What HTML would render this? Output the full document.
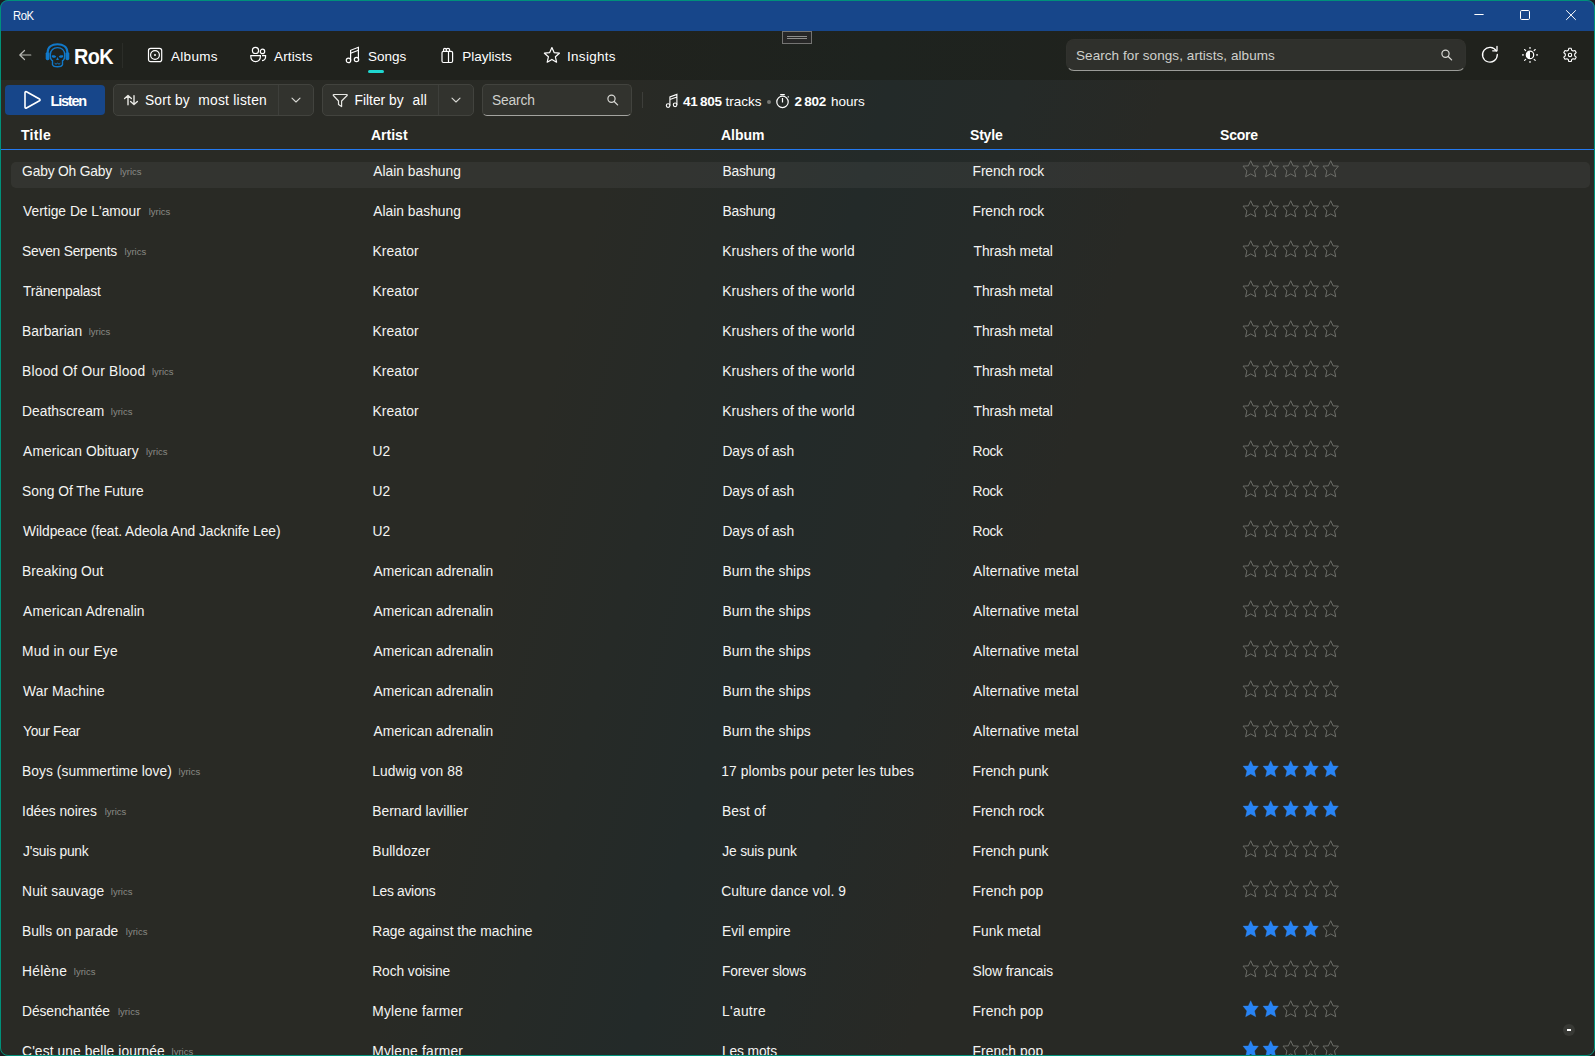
<!DOCTYPE html>
<html>
<head>
<meta charset="utf-8">
<style>
html,body{margin:0;padding:0;}
body{width:1595px;height:1056px;overflow:hidden;background:#1c1d20;font-family:"Liberation Sans",sans-serif;color:#fff;position:relative;}
#win{position:absolute;left:0;top:0;width:1595px;height:1056px;border-radius:8px;overflow:hidden;background:#282925;}
#bord{position:absolute;left:0;top:0;width:1595px;height:1056px;box-sizing:border-box;border:1px solid #00917a;border-radius:8px;}
#titlebar{position:absolute;left:0;top:0;width:1595px;height:31px;background:#17468a;}
#titlebar .t{position:absolute;left:13px;top:9px;font-size:12.5px;line-height:15px;letter-spacing:-0.5px;transform:scaleX(0.9);transform-origin:0 0;color:#fff;}
#nav{position:absolute;left:0;top:31px;width:1595px;height:49px;background:linear-gradient(90deg,#20221d 0%,#20221d 38%,#1e231f 55%,#20221d 75%,#20221d 100%);}
#content{position:absolute;left:0;top:80px;width:1595px;height:976px;background:linear-gradient(105deg,#292a25 0%,#292a25 34%,#262a27 41%,#232a29 48%,#252a28 55%,#282925 63%,#282925 100%);}
.abs{position:absolute;}
.navtxt{position:absolute;top:48px;font-size:13.5px;line-height:18px;color:#fff;}
.btn{position:absolute;top:84px;height:32px;border-radius:4px;box-sizing:border-box;}
.hdr{position:absolute;top:126px;font-size:14px;font-weight:bold;line-height:18px;color:#fff;}
.row{position:absolute;left:0;width:1595px;height:40px;}
.c{position:absolute;top:0;line-height:40px;font-size:13.8px;color:#f4f4f2;white-space:nowrap;}
.c1{left:23px;}
.c2{left:373px;}
.c3{left:723px;}
.c4{left:973px;}
.ly{position:absolute;top:0px;line-height:40px;font-size:9.5px;color:#8a8b86;white-space:nowrap;}
.sc{position:absolute;left:1240px;top:8px;}
.stars{display:block;}
</style>
</head>
<body>
<div id="win">
  <div id="titlebar">
    <div class="t">RoK</div>
    <!-- window controls -->
    <svg class="abs" style="left:1472px;top:8px" width="110" height="14" viewBox="0 0 110 14">
      <line x1="2.4" y1="6.5" x2="11.6" y2="6.5" stroke="#fff" stroke-width="1"/>
      <rect x="48.5" y="2.5" width="9" height="9" rx="1.2" fill="none" stroke="#fff" stroke-width="1"/>
      <path d="M94.2 2.3 L103.8 11.9 M103.8 2.3 L94.2 11.9" stroke="#fff" stroke-width="1"/>
    </svg>
  </div>
  <div id="nav">
    <!-- drag handle -->
    <div class="abs" style="left:782px;top:0px;width:30px;height:13px;box-sizing:border-box;border:1px solid #747472;background:#272727;"></div>
    <div class="abs" style="left:787px;top:5px;width:20px;height:1px;background:#8e8e8c;"></div>
    <div class="abs" style="left:787px;top:7px;width:20px;height:1px;background:#8e8e8c;"></div>
  </div>
  <div id="content"></div>

  <!-- back arrow -->
  <svg class="abs" style="left:14px;top:42px" width="24" height="24" viewBox="0 0 24 24">
    <path d="M10.5 8.5 L5.8 13 L10.5 17.5 M6 13 L16.8 13" fill="none" stroke="#b8b9b4" stroke-width="1.2" stroke-linecap="round" stroke-linejoin="round"/>
  </svg>
  <!-- logo -->
  <svg class="abs" style="left:40px;top:40px" width="35" height="30" viewBox="0 0 35 30">
    <g fill="none" stroke="#1178c8">
      <path d="M7.6 12.5 C7.6 6.8 11.8 4.3 17.5 4.3 C23.2 4.3 27.4 6.8 27.4 12.5" stroke-width="2.1"/>
      <path d="M11.6 20.1 C10.4 19 10.3 17.2 10.3 14.9 C10.3 10.2 13.5 7.6 17.5 7.6 C21.5 7.6 24.7 10.2 24.7 14.9 C24.7 17.2 24.6 19 23.4 20.1 L22.5 20.7 L22.5 24.7 C21.9 26.1 19.9 26.8 17.5 26.8 C15.1 26.8 13.1 26.1 12.5 24.7 L12.5 20.7 Z" stroke-width="1.4"/>
      <path d="M14.6 23.2 L16 24.2 L17.5 23.2 L19 24.2 L20.4 23.2" stroke-width="1"/>
    </g>
    <g fill="#1178c8">
      <rect x="5.7" y="11.9" width="3.8" height="8.3" rx="1.7"/>
      <rect x="25.5" y="11.9" width="3.8" height="8.3" rx="1.7"/>
      <path d="M11.8 15.6 C12.8 14.8 15.2 15.1 16.2 16.4 C15.8 17.8 13.8 18.2 12.6 17.6 C11.8 17.2 11.6 16.2 11.8 15.6 Z"/>
      <path d="M23.2 15.6 C22.2 14.8 19.8 15.1 18.8 16.4 C19.2 17.8 21.2 18.2 22.4 17.6 C23.2 17.2 23.4 16.2 23.2 15.6 Z"/>
      <path d="M17.5 17 L16.1 20.1 L18.9 20.1 Z"/>
    </g>
  </svg>
  <div class="abs" style="left:73.5px;top:45px;font-size:22px;font-weight:bold;line-height:24px;letter-spacing:-0.6px;transform:scaleX(0.9);transform-origin:0 0;">RoK</div>
  <div class="abs" style="left:122px;top:43px;width:1px;height:25px;background:#2b2d28;"></div>

  <!-- nav tabs -->
  <svg class="abs" style="left:140px;top:42px" width="30" height="24" viewBox="0 0 30 24">
    <rect x="8.5" y="6.4" width="13.2" height="13.2" rx="2.2" fill="none" stroke="#fff" stroke-width="1.2"/>
    <circle cx="15" cy="13" r="4.4" fill="none" stroke="#fff" stroke-width="1.2"/>
    <circle cx="15" cy="13" r="1" fill="#fff"/>
  </svg>
  <div class="navtxt" style="left:171px;letter-spacing:0.3px">Albums</div>
  <svg class="abs" style="left:244px;top:42px" width="30" height="24" viewBox="0 0 30 24">
    <g fill="none" stroke="#fff" stroke-width="1.2">
      <circle cx="11.5" cy="8.4" r="3.1"/>
      <circle cx="18.5" cy="9.4" r="2.2"/>
      <path d="M6.8 13.6 L16.4 13.6 C16.6 17.5 14.5 19.6 11.6 19.6 C8.7 19.6 6.6 17.5 6.8 13.6 Z"/>
      <path d="M18 13.6 L21.6 13.6 C21.8 16.6 20.3 18.5 18 18.7"/>
    </g>
  </svg>
  <div class="navtxt" style="left:274px;letter-spacing:0.15px">Artists</div>
  <svg class="abs" style="left:338px;top:42px" width="30" height="24" viewBox="0 0 30 24">
    <g fill="none" stroke="#fff" stroke-width="1.2">
      <circle cx="10.5" cy="18.4" r="2.2"/>
      <circle cx="18.5" cy="17.5" r="2.2"/>
      <path d="M12.6 18.4 L12.6 8.3 L20.4 5.3 L20.4 17.5"/>
      <path d="M12.6 11.2 L20.4 8.3"/>
    </g>
  </svg>
  <div class="navtxt" style="left:368px">Songs</div>
  <div class="abs" style="left:368px;top:70px;width:16px;height:3px;border-radius:2px;background:#1fd6cf;"></div>
  <svg class="abs" style="left:432px;top:42px" width="30" height="24" viewBox="0 0 30 24">
    <g fill="none" stroke="#fff" stroke-width="1.2">
      <rect x="10" y="9.3" width="10.6" height="11.2" rx="1.5"/>
      <path d="M16.5 9.3 L16.5 20.5"/>
      <path d="M11.5 9.3 L11.5 7.8 C11.5 5.8 14.3 5.8 14.3 7.8 L14.3 9.3 M14.3 7.8 C14.3 5.8 17.6 5.8 17.6 7.8 L17.6 9.3"/>
    </g>
  </svg>
  <div class="navtxt" style="left:462.3px">Playlists</div>
  <svg class="abs" style="left:538px;top:42px" width="30" height="24" viewBox="0 0 30 24">
    <path d="M13.9 5.6 L16.1 10.6 L21.4 11.2 L17.4 14.8 L18.6 20.2 L13.9 17.4 L9.2 20.2 L10.4 14.8 L6.4 11.2 L11.7 10.6 Z" fill="none" stroke="#fff" stroke-width="1.2" stroke-linejoin="round"/>
  </svg>
  <div class="navtxt" style="left:567px;letter-spacing:0.3px">Insights</div>

  <!-- top search -->
  <div class="abs" style="left:1066px;top:39px;width:400px;height:32px;box-sizing:border-box;border-radius:8px;background:#2f302c;border:1px solid #31322e;border-bottom:1px solid #9b9c98;"></div>
  <div class="abs" style="left:1076px;top:47px;font-size:13.5px;line-height:18px;color:#cfd0cc;letter-spacing:0.07px;">Search for songs, artists, albums</div>
  <svg class="abs" style="left:1438px;top:46px" width="18" height="18" viewBox="0 0 18 18">
    <circle cx="7.5" cy="7.8" r="3.6" fill="none" stroke="#d8d8d4" stroke-width="1.2"/>
    <path d="M10.2 10.5 L13.6 13.9" stroke="#d8d8d4" stroke-width="1.3" stroke-linecap="round"/>
  </svg>
  <!-- refresh -->
  <svg class="abs" style="left:1478px;top:43px" width="24" height="24" viewBox="0 0 24 24">
    <path d="M18.3 8 A7.4 7.4 0 1 0 19.3 11.4" fill="none" stroke="#fff" stroke-width="1.3" stroke-linecap="round"/>
    <path d="M19 3.3 L19 7.8 L14.7 7.8" fill="none" stroke="#fff" stroke-width="1.3" stroke-linecap="round" stroke-linejoin="round"/>
  </svg>
  <!-- theme -->
  <svg class="abs" style="left:1518px;top:43px" width="24" height="24" viewBox="0 0 24 24">
    <circle cx="12" cy="11.9" r="3.7" fill="none" stroke="#fff" stroke-width="1.2"/>
    <path d="M12 8.2 A3.7 3.7 0 0 0 12 15.6 Z" fill="#fff"/>
    <g fill="#fff">
      <rect x="11.25" y="4.2" width="1.5" height="1.5"/><rect x="11.25" y="18.2" width="1.5" height="1.5"/>
      <rect x="4.2" y="11.15" width="1.5" height="1.5"/><rect x="18.3" y="11.15" width="1.5" height="1.5"/>
    </g>
    <g stroke="#fff" stroke-width="1.1" stroke-linecap="round">
      <path d="M6.6 6.5 L7.7 7.6 M17.2 6.5 L16.1 7.6 M6.6 17.4 L7.7 16.3 M17.2 17.4 L16.1 16.3"/>
    </g>
  </svg>
  <!-- settings -->
  <svg class="abs" style="left:1558px;top:43px" width="24" height="24" viewBox="0 0 24 24">
    <path d="M10.8 5.3 L13.2 5.3 L13.7 7.3 L15.1 8.1 L17 7.5 L18.2 9.6 L16.7 11 L16.7 12.8 L18.2 14.2 L17 16.3 L15.1 15.7 L13.7 16.5 L13.2 18.5 L10.8 18.5 L10.3 16.5 L8.9 15.7 L7 16.3 L5.8 14.2 L7.3 12.8 L7.3 11 L5.8 9.6 L7 7.5 L8.9 8.1 L10.3 7.3 Z" fill="none" stroke="#fff" stroke-width="1.1" stroke-linejoin="round"/>
    <circle cx="12" cy="11.9" r="1.7" fill="none" stroke="#fff" stroke-width="1.1"/>
  </svg>

  <!-- toolbar -->
  <div class="btn" style="left:5px;top:85px;height:30px;width:100px;background:#17468a;"></div>
  <svg class="abs" style="left:18px;top:86px" width="30" height="28" viewBox="0 0 30 28">
    <path d="M7 6.6 C7 5.8 7.8 5.4 8.5 5.8 L21.5 13 C22.2 13.4 22.2 14.4 21.5 14.8 L8.5 22 C7.8 22.4 7 22 7 21.2 Z" fill="none" stroke="#fff" stroke-width="1.6" stroke-linejoin="round"/>
  </svg>
  <div class="abs" style="left:50.5px;top:92px;font-size:14.5px;font-weight:bold;line-height:18px;letter-spacing:-1.2px;">Listen</div>

  <div class="btn" style="left:113px;width:201px;background:#32332e;border:1px solid #42433e;border-radius:5px;"></div>
  <div class="abs" style="left:278px;top:85px;width:1px;height:30px;background:#3e3f3b;"></div>
  <svg class="abs" style="left:118px;top:86px" width="30" height="28" viewBox="0 0 30 28">
    <g fill="none" stroke="#e8e8e4" stroke-width="1.4" stroke-linecap="round" stroke-linejoin="round">
      <path d="M6.6 12.6 L10 9.6 L13.4 12.6 M10 9.8 L10 18.8"/>
      <path d="M12.6 15.5 L16 18.5 L19.4 15.5 M16 9.6 L16 18.3"/>
    </g>
  </svg>
  <div class="abs" style="left:145px;top:92px;font-size:13.8px;line-height:18px;color:#fff;letter-spacing:0.15px;">Sort by</div>
  <div class="abs" style="left:198.3px;top:92px;font-size:13.8px;line-height:18px;color:#fff;letter-spacing:0.25px;">most listen</div>
  <svg class="abs" style="left:289px;top:95px" width="14" height="10" viewBox="0 0 14 10">
    <path d="M3 3.2 L7 7 L11 3.2" fill="none" stroke="#d8d8d4" stroke-width="1.1" stroke-linecap="round" stroke-linejoin="round"/>
  </svg>

  <div class="btn" style="left:322px;width:152px;background:#32332e;border:1px solid #42433e;border-radius:5px;"></div>
  <div class="abs" style="left:438px;top:85px;width:1px;height:30px;background:#3e3f3b;"></div>
  <svg class="abs" style="left:326px;top:86px" width="30" height="28" viewBox="0 0 30 28">
    <path d="M7.8 8.5 L20.7 8.5 C21.2 8.5 21.5 9.1 21.1 9.5 L15.6 15 L15.6 20.6 L12.5 18.6 L12.5 15 L7.4 9.5 C7 9.1 7.3 8.5 7.8 8.5 Z" fill="none" stroke="#e8e8e4" stroke-width="1.2" stroke-linejoin="round"/>
  </svg>
  <div class="abs" style="left:354.5px;top:92px;font-size:13.8px;line-height:18px;color:#fff;">Filter by</div>
  <div class="abs" style="left:412.5px;top:92px;font-size:13.8px;line-height:18px;color:#fff;letter-spacing:0.3px;">all</div>
  <svg class="abs" style="left:449px;top:95px" width="14" height="10" viewBox="0 0 14 10">
    <path d="M3 3.2 L7 7 L11 3.2" fill="none" stroke="#d8d8d4" stroke-width="1.1" stroke-linecap="round" stroke-linejoin="round"/>
  </svg>

  <div class="btn" style="left:482px;width:150px;height:32px;background:#32332e;border:1px solid #42433e;border-bottom:1px solid #a3a39f;border-radius:5px;"></div>
  <div class="abs" style="left:492px;top:92px;font-size:13.8px;line-height:18px;color:#cfd0cc;letter-spacing:-0.15px;">Search</div>
  <svg class="abs" style="left:604px;top:91px" width="18" height="18" viewBox="0 0 18 18">
    <circle cx="7.5" cy="7.8" r="3.6" fill="none" stroke="#d8d8d4" stroke-width="1.2"/>
    <path d="M10.2 10.5 L13.6 13.9" stroke="#d8d8d4" stroke-width="1.3" stroke-linecap="round"/>
  </svg>
  <div class="abs" style="left:642px;top:92px;width:1px;height:16px;background:#3d3e3a;"></div>

  <!-- stats -->
  <svg class="abs" style="left:662px;top:90px" width="20" height="20" viewBox="0 0 20 20">
    <g fill="none" stroke="#fff" stroke-width="1.1">
      <circle cx="6.1" cy="15.6" r="1.8"/>
      <circle cx="13.1" cy="14.8" r="1.8"/>
      <path d="M7.9 15.6 L7.9 6.9 L14.9 4.4 L14.9 14.8 M7.9 9.5 L14.9 7.1"/>
    </g>
  </svg>
  <div class="abs" style="left:683px;top:93px;font-size:13.5px;line-height:18px;white-space:nowrap;font-weight:bold;letter-spacing:-0.25px;">41&thinsp;805</div>
  <div class="abs" style="left:725.5px;top:93px;font-size:13.5px;line-height:18px;white-space:nowrap;">tracks</div>
  <div class="abs" style="left:767px;top:100px;width:3.5px;height:3.5px;border-radius:2px;background:#777873;"></div>
  <svg class="abs" style="left:773px;top:90px" width="20" height="20" viewBox="0 0 20 20">
    <g fill="none" stroke="#fff" stroke-width="1.2">
      <circle cx="9.5" cy="11.9" r="5.7"/>
      <path d="M7.2 4.6 L11.8 4.6 M9.5 8 L9.5 12.6 M14.8 6.5 L15.6 7.3"/>
    </g>
  </svg>
  <div class="abs" style="left:794.5px;top:93px;font-size:13.5px;line-height:18px;white-space:nowrap;font-weight:bold;letter-spacing:-0.25px;">2&thinsp;802</div>
  <div class="abs" style="left:831px;top:93px;font-size:13.5px;line-height:18px;white-space:nowrap;">hours</div>

  <!-- header -->
  <div class="hdr" style="left:21px;letter-spacing:0.3px">Title</div>
  <div class="hdr" style="left:371px">Artist</div>
  <div class="hdr" style="left:721px">Album</div>
  <div class="hdr" style="left:970px;letter-spacing:-0.2px">Style</div>
  <div class="hdr" style="left:1220px;letter-spacing:-0.2px">Score</div>
  <div class="abs" style="left:0;top:149px;width:1595px;height:1px;background:#2479f0;"></div>

  <!-- hover highlight -->
  <div class="abs" style="left:11px;top:162px;width:1579px;height:26px;border-radius:5px;background:rgba(255,255,255,0.052);"></div>

<div class="row" style="top:152px"><div class="c" style="left:22.1px;letter-spacing:-0.182px">Gaby Oh Gaby</div><span class="ly" style="left:119.9px">lyrics</span><div class="c" style="left:373.2px;letter-spacing:0.025px">Alain bashung</div><div class="c" style="left:722.5px;letter-spacing:-0.25px">Bashung</div><div class="c" style="left:972.6px;letter-spacing:-0.13px">French rock</div><div class="sc"><svg class="stars" width="100" height="18" viewBox="0 0 100 18"><path transform="translate(0,0)" d="M10.7 0.7 L13.1 5.9 L18.4 6.1 L14.5 10.9 L15.8 16.8 L10.7 13.9 L5.6 16.8 L6.9 10.9 L3.0 6.1 L8.3 5.9 Z" fill="none" stroke="#6b6c67" stroke-width="1" stroke-linejoin="round"/><path transform="translate(20,0)" d="M10.7 0.7 L13.1 5.9 L18.4 6.1 L14.5 10.9 L15.8 16.8 L10.7 13.9 L5.6 16.8 L6.9 10.9 L3.0 6.1 L8.3 5.9 Z" fill="none" stroke="#6b6c67" stroke-width="1" stroke-linejoin="round"/><path transform="translate(40,0)" d="M10.7 0.7 L13.1 5.9 L18.4 6.1 L14.5 10.9 L15.8 16.8 L10.7 13.9 L5.6 16.8 L6.9 10.9 L3.0 6.1 L8.3 5.9 Z" fill="none" stroke="#6b6c67" stroke-width="1" stroke-linejoin="round"/><path transform="translate(60,0)" d="M10.7 0.7 L13.1 5.9 L18.4 6.1 L14.5 10.9 L15.8 16.8 L10.7 13.9 L5.6 16.8 L6.9 10.9 L3.0 6.1 L8.3 5.9 Z" fill="none" stroke="#6b6c67" stroke-width="1" stroke-linejoin="round"/><path transform="translate(80,0)" d="M10.7 0.7 L13.1 5.9 L18.4 6.1 L14.5 10.9 L15.8 16.8 L10.7 13.9 L5.6 16.8 L6.9 10.9 L3.0 6.1 L8.3 5.9 Z" fill="none" stroke="#6b6c67" stroke-width="1" stroke-linejoin="round"/></svg></div></div>
<div class="row" style="top:192px"><div class="c" style="left:23.1px">Vertige De L&#x27;amour</div><span class="ly" style="left:148.7px">lyrics</span><div class="c" style="left:373.2px;letter-spacing:0.025px">Alain bashung</div><div class="c" style="left:722.5px;letter-spacing:-0.25px">Bashung</div><div class="c" style="left:972.6px;letter-spacing:-0.13px">French rock</div><div class="sc"><svg class="stars" width="100" height="18" viewBox="0 0 100 18"><path transform="translate(0,0)" d="M10.7 0.7 L13.1 5.9 L18.4 6.1 L14.5 10.9 L15.8 16.8 L10.7 13.9 L5.6 16.8 L6.9 10.9 L3.0 6.1 L8.3 5.9 Z" fill="none" stroke="#6b6c67" stroke-width="1" stroke-linejoin="round"/><path transform="translate(20,0)" d="M10.7 0.7 L13.1 5.9 L18.4 6.1 L14.5 10.9 L15.8 16.8 L10.7 13.9 L5.6 16.8 L6.9 10.9 L3.0 6.1 L8.3 5.9 Z" fill="none" stroke="#6b6c67" stroke-width="1" stroke-linejoin="round"/><path transform="translate(40,0)" d="M10.7 0.7 L13.1 5.9 L18.4 6.1 L14.5 10.9 L15.8 16.8 L10.7 13.9 L5.6 16.8 L6.9 10.9 L3.0 6.1 L8.3 5.9 Z" fill="none" stroke="#6b6c67" stroke-width="1" stroke-linejoin="round"/><path transform="translate(60,0)" d="M10.7 0.7 L13.1 5.9 L18.4 6.1 L14.5 10.9 L15.8 16.8 L10.7 13.9 L5.6 16.8 L6.9 10.9 L3.0 6.1 L8.3 5.9 Z" fill="none" stroke="#6b6c67" stroke-width="1" stroke-linejoin="round"/><path transform="translate(80,0)" d="M10.7 0.7 L13.1 5.9 L18.4 6.1 L14.5 10.9 L15.8 16.8 L10.7 13.9 L5.6 16.8 L6.9 10.9 L3.0 6.1 L8.3 5.9 Z" fill="none" stroke="#6b6c67" stroke-width="1" stroke-linejoin="round"/></svg></div></div>
<div class="row" style="top:232px"><div class="c" style="left:22.1px;letter-spacing:-0.231px">Seven Serpents</div><span class="ly" style="left:124.6px">lyrics</span><div class="c" style="left:372.5px;letter-spacing:0.133px">Kreator</div><div class="c" style="left:722.2px;letter-spacing:0.1px">Krushers of the world</div><div class="c" style="left:973.6px;letter-spacing:-0.109px">Thrash metal</div><div class="sc"><svg class="stars" width="100" height="18" viewBox="0 0 100 18"><path transform="translate(0,0)" d="M10.7 0.7 L13.1 5.9 L18.4 6.1 L14.5 10.9 L15.8 16.8 L10.7 13.9 L5.6 16.8 L6.9 10.9 L3.0 6.1 L8.3 5.9 Z" fill="none" stroke="#6b6c67" stroke-width="1" stroke-linejoin="round"/><path transform="translate(20,0)" d="M10.7 0.7 L13.1 5.9 L18.4 6.1 L14.5 10.9 L15.8 16.8 L10.7 13.9 L5.6 16.8 L6.9 10.9 L3.0 6.1 L8.3 5.9 Z" fill="none" stroke="#6b6c67" stroke-width="1" stroke-linejoin="round"/><path transform="translate(40,0)" d="M10.7 0.7 L13.1 5.9 L18.4 6.1 L14.5 10.9 L15.8 16.8 L10.7 13.9 L5.6 16.8 L6.9 10.9 L3.0 6.1 L8.3 5.9 Z" fill="none" stroke="#6b6c67" stroke-width="1" stroke-linejoin="round"/><path transform="translate(60,0)" d="M10.7 0.7 L13.1 5.9 L18.4 6.1 L14.5 10.9 L15.8 16.8 L10.7 13.9 L5.6 16.8 L6.9 10.9 L3.0 6.1 L8.3 5.9 Z" fill="none" stroke="#6b6c67" stroke-width="1" stroke-linejoin="round"/><path transform="translate(80,0)" d="M10.7 0.7 L13.1 5.9 L18.4 6.1 L14.5 10.9 L15.8 16.8 L10.7 13.9 L5.6 16.8 L6.9 10.9 L3.0 6.1 L8.3 5.9 Z" fill="none" stroke="#6b6c67" stroke-width="1" stroke-linejoin="round"/></svg></div></div>
<div class="row" style="top:272px"><div class="c" style="left:23.1px;letter-spacing:-0.209px">Tränenpalast</div><div class="c" style="left:372.5px;letter-spacing:0.133px">Kreator</div><div class="c" style="left:722.2px;letter-spacing:0.1px">Krushers of the world</div><div class="c" style="left:973.6px;letter-spacing:-0.109px">Thrash metal</div><div class="sc"><svg class="stars" width="100" height="18" viewBox="0 0 100 18"><path transform="translate(0,0)" d="M10.7 0.7 L13.1 5.9 L18.4 6.1 L14.5 10.9 L15.8 16.8 L10.7 13.9 L5.6 16.8 L6.9 10.9 L3.0 6.1 L8.3 5.9 Z" fill="none" stroke="#6b6c67" stroke-width="1" stroke-linejoin="round"/><path transform="translate(20,0)" d="M10.7 0.7 L13.1 5.9 L18.4 6.1 L14.5 10.9 L15.8 16.8 L10.7 13.9 L5.6 16.8 L6.9 10.9 L3.0 6.1 L8.3 5.9 Z" fill="none" stroke="#6b6c67" stroke-width="1" stroke-linejoin="round"/><path transform="translate(40,0)" d="M10.7 0.7 L13.1 5.9 L18.4 6.1 L14.5 10.9 L15.8 16.8 L10.7 13.9 L5.6 16.8 L6.9 10.9 L3.0 6.1 L8.3 5.9 Z" fill="none" stroke="#6b6c67" stroke-width="1" stroke-linejoin="round"/><path transform="translate(60,0)" d="M10.7 0.7 L13.1 5.9 L18.4 6.1 L14.5 10.9 L15.8 16.8 L10.7 13.9 L5.6 16.8 L6.9 10.9 L3.0 6.1 L8.3 5.9 Z" fill="none" stroke="#6b6c67" stroke-width="1" stroke-linejoin="round"/><path transform="translate(80,0)" d="M10.7 0.7 L13.1 5.9 L18.4 6.1 L14.5 10.9 L15.8 16.8 L10.7 13.9 L5.6 16.8 L6.9 10.9 L3.0 6.1 L8.3 5.9 Z" fill="none" stroke="#6b6c67" stroke-width="1" stroke-linejoin="round"/></svg></div></div>
<div class="row" style="top:312px"><div class="c" style="left:22.1px;letter-spacing:0.025px">Barbarian</div><span class="ly" style="left:88.7px">lyrics</span><div class="c" style="left:372.5px;letter-spacing:0.133px">Kreator</div><div class="c" style="left:722.2px;letter-spacing:0.1px">Krushers of the world</div><div class="c" style="left:973.6px;letter-spacing:-0.109px">Thrash metal</div><div class="sc"><svg class="stars" width="100" height="18" viewBox="0 0 100 18"><path transform="translate(0,0)" d="M10.7 0.7 L13.1 5.9 L18.4 6.1 L14.5 10.9 L15.8 16.8 L10.7 13.9 L5.6 16.8 L6.9 10.9 L3.0 6.1 L8.3 5.9 Z" fill="none" stroke="#6b6c67" stroke-width="1" stroke-linejoin="round"/><path transform="translate(20,0)" d="M10.7 0.7 L13.1 5.9 L18.4 6.1 L14.5 10.9 L15.8 16.8 L10.7 13.9 L5.6 16.8 L6.9 10.9 L3.0 6.1 L8.3 5.9 Z" fill="none" stroke="#6b6c67" stroke-width="1" stroke-linejoin="round"/><path transform="translate(40,0)" d="M10.7 0.7 L13.1 5.9 L18.4 6.1 L14.5 10.9 L15.8 16.8 L10.7 13.9 L5.6 16.8 L6.9 10.9 L3.0 6.1 L8.3 5.9 Z" fill="none" stroke="#6b6c67" stroke-width="1" stroke-linejoin="round"/><path transform="translate(60,0)" d="M10.7 0.7 L13.1 5.9 L18.4 6.1 L14.5 10.9 L15.8 16.8 L10.7 13.9 L5.6 16.8 L6.9 10.9 L3.0 6.1 L8.3 5.9 Z" fill="none" stroke="#6b6c67" stroke-width="1" stroke-linejoin="round"/><path transform="translate(80,0)" d="M10.7 0.7 L13.1 5.9 L18.4 6.1 L14.5 10.9 L15.8 16.8 L10.7 13.9 L5.6 16.8 L6.9 10.9 L3.0 6.1 L8.3 5.9 Z" fill="none" stroke="#6b6c67" stroke-width="1" stroke-linejoin="round"/></svg></div></div>
<div class="row" style="top:352px"><div class="c" style="left:22.1px;letter-spacing:0.2px">Blood Of Our Blood</div><span class="ly" style="left:151.9px">lyrics</span><div class="c" style="left:372.5px;letter-spacing:0.133px">Kreator</div><div class="c" style="left:722.2px;letter-spacing:0.1px">Krushers of the world</div><div class="c" style="left:973.6px;letter-spacing:-0.109px">Thrash metal</div><div class="sc"><svg class="stars" width="100" height="18" viewBox="0 0 100 18"><path transform="translate(0,0)" d="M10.7 0.7 L13.1 5.9 L18.4 6.1 L14.5 10.9 L15.8 16.8 L10.7 13.9 L5.6 16.8 L6.9 10.9 L3.0 6.1 L8.3 5.9 Z" fill="none" stroke="#6b6c67" stroke-width="1" stroke-linejoin="round"/><path transform="translate(20,0)" d="M10.7 0.7 L13.1 5.9 L18.4 6.1 L14.5 10.9 L15.8 16.8 L10.7 13.9 L5.6 16.8 L6.9 10.9 L3.0 6.1 L8.3 5.9 Z" fill="none" stroke="#6b6c67" stroke-width="1" stroke-linejoin="round"/><path transform="translate(40,0)" d="M10.7 0.7 L13.1 5.9 L18.4 6.1 L14.5 10.9 L15.8 16.8 L10.7 13.9 L5.6 16.8 L6.9 10.9 L3.0 6.1 L8.3 5.9 Z" fill="none" stroke="#6b6c67" stroke-width="1" stroke-linejoin="round"/><path transform="translate(60,0)" d="M10.7 0.7 L13.1 5.9 L18.4 6.1 L14.5 10.9 L15.8 16.8 L10.7 13.9 L5.6 16.8 L6.9 10.9 L3.0 6.1 L8.3 5.9 Z" fill="none" stroke="#6b6c67" stroke-width="1" stroke-linejoin="round"/><path transform="translate(80,0)" d="M10.7 0.7 L13.1 5.9 L18.4 6.1 L14.5 10.9 L15.8 16.8 L10.7 13.9 L5.6 16.8 L6.9 10.9 L3.0 6.1 L8.3 5.9 Z" fill="none" stroke="#6b6c67" stroke-width="1" stroke-linejoin="round"/></svg></div></div>
<div class="row" style="top:392px"><div class="c" style="left:22.1px;letter-spacing:0.02px">Deathscream</div><span class="ly" style="left:110.8px">lyrics</span><div class="c" style="left:372.5px;letter-spacing:0.133px">Kreator</div><div class="c" style="left:722.2px;letter-spacing:0.1px">Krushers of the world</div><div class="c" style="left:973.6px;letter-spacing:-0.109px">Thrash metal</div><div class="sc"><svg class="stars" width="100" height="18" viewBox="0 0 100 18"><path transform="translate(0,0)" d="M10.7 0.7 L13.1 5.9 L18.4 6.1 L14.5 10.9 L15.8 16.8 L10.7 13.9 L5.6 16.8 L6.9 10.9 L3.0 6.1 L8.3 5.9 Z" fill="none" stroke="#6b6c67" stroke-width="1" stroke-linejoin="round"/><path transform="translate(20,0)" d="M10.7 0.7 L13.1 5.9 L18.4 6.1 L14.5 10.9 L15.8 16.8 L10.7 13.9 L5.6 16.8 L6.9 10.9 L3.0 6.1 L8.3 5.9 Z" fill="none" stroke="#6b6c67" stroke-width="1" stroke-linejoin="round"/><path transform="translate(40,0)" d="M10.7 0.7 L13.1 5.9 L18.4 6.1 L14.5 10.9 L15.8 16.8 L10.7 13.9 L5.6 16.8 L6.9 10.9 L3.0 6.1 L8.3 5.9 Z" fill="none" stroke="#6b6c67" stroke-width="1" stroke-linejoin="round"/><path transform="translate(60,0)" d="M10.7 0.7 L13.1 5.9 L18.4 6.1 L14.5 10.9 L15.8 16.8 L10.7 13.9 L5.6 16.8 L6.9 10.9 L3.0 6.1 L8.3 5.9 Z" fill="none" stroke="#6b6c67" stroke-width="1" stroke-linejoin="round"/><path transform="translate(80,0)" d="M10.7 0.7 L13.1 5.9 L18.4 6.1 L14.5 10.9 L15.8 16.8 L10.7 13.9 L5.6 16.8 L6.9 10.9 L3.0 6.1 L8.3 5.9 Z" fill="none" stroke="#6b6c67" stroke-width="1" stroke-linejoin="round"/></svg></div></div>
<div class="row" style="top:432px"><div class="c" style="left:23.1px;letter-spacing:0.081px">American Obituary</div><span class="ly" style="left:145.9px">lyrics</span><div class="c" style="left:372.5px;letter-spacing:0.1px">U2</div><div class="c" style="left:722.5px;letter-spacing:-0.13px">Days of ash</div><div class="c" style="left:972.6px;letter-spacing:-0.4px">Rock</div><div class="sc"><svg class="stars" width="100" height="18" viewBox="0 0 100 18"><path transform="translate(0,0)" d="M10.7 0.7 L13.1 5.9 L18.4 6.1 L14.5 10.9 L15.8 16.8 L10.7 13.9 L5.6 16.8 L6.9 10.9 L3.0 6.1 L8.3 5.9 Z" fill="none" stroke="#6b6c67" stroke-width="1" stroke-linejoin="round"/><path transform="translate(20,0)" d="M10.7 0.7 L13.1 5.9 L18.4 6.1 L14.5 10.9 L15.8 16.8 L10.7 13.9 L5.6 16.8 L6.9 10.9 L3.0 6.1 L8.3 5.9 Z" fill="none" stroke="#6b6c67" stroke-width="1" stroke-linejoin="round"/><path transform="translate(40,0)" d="M10.7 0.7 L13.1 5.9 L18.4 6.1 L14.5 10.9 L15.8 16.8 L10.7 13.9 L5.6 16.8 L6.9 10.9 L3.0 6.1 L8.3 5.9 Z" fill="none" stroke="#6b6c67" stroke-width="1" stroke-linejoin="round"/><path transform="translate(60,0)" d="M10.7 0.7 L13.1 5.9 L18.4 6.1 L14.5 10.9 L15.8 16.8 L10.7 13.9 L5.6 16.8 L6.9 10.9 L3.0 6.1 L8.3 5.9 Z" fill="none" stroke="#6b6c67" stroke-width="1" stroke-linejoin="round"/><path transform="translate(80,0)" d="M10.7 0.7 L13.1 5.9 L18.4 6.1 L14.5 10.9 L15.8 16.8 L10.7 13.9 L5.6 16.8 L6.9 10.9 L3.0 6.1 L8.3 5.9 Z" fill="none" stroke="#6b6c67" stroke-width="1" stroke-linejoin="round"/></svg></div></div>
<div class="row" style="top:472px"><div class="c" style="left:22.1px">Song Of The Future</div><div class="c" style="left:372.5px;letter-spacing:0.1px">U2</div><div class="c" style="left:722.5px;letter-spacing:-0.13px">Days of ash</div><div class="c" style="left:972.6px;letter-spacing:-0.4px">Rock</div><div class="sc"><svg class="stars" width="100" height="18" viewBox="0 0 100 18"><path transform="translate(0,0)" d="M10.7 0.7 L13.1 5.9 L18.4 6.1 L14.5 10.9 L15.8 16.8 L10.7 13.9 L5.6 16.8 L6.9 10.9 L3.0 6.1 L8.3 5.9 Z" fill="none" stroke="#6b6c67" stroke-width="1" stroke-linejoin="round"/><path transform="translate(20,0)" d="M10.7 0.7 L13.1 5.9 L18.4 6.1 L14.5 10.9 L15.8 16.8 L10.7 13.9 L5.6 16.8 L6.9 10.9 L3.0 6.1 L8.3 5.9 Z" fill="none" stroke="#6b6c67" stroke-width="1" stroke-linejoin="round"/><path transform="translate(40,0)" d="M10.7 0.7 L13.1 5.9 L18.4 6.1 L14.5 10.9 L15.8 16.8 L10.7 13.9 L5.6 16.8 L6.9 10.9 L3.0 6.1 L8.3 5.9 Z" fill="none" stroke="#6b6c67" stroke-width="1" stroke-linejoin="round"/><path transform="translate(60,0)" d="M10.7 0.7 L13.1 5.9 L18.4 6.1 L14.5 10.9 L15.8 16.8 L10.7 13.9 L5.6 16.8 L6.9 10.9 L3.0 6.1 L8.3 5.9 Z" fill="none" stroke="#6b6c67" stroke-width="1" stroke-linejoin="round"/><path transform="translate(80,0)" d="M10.7 0.7 L13.1 5.9 L18.4 6.1 L14.5 10.9 L15.8 16.8 L10.7 13.9 L5.6 16.8 L6.9 10.9 L3.0 6.1 L8.3 5.9 Z" fill="none" stroke="#6b6c67" stroke-width="1" stroke-linejoin="round"/></svg></div></div>
<div class="row" style="top:512px"><div class="c" style="left:23.1px;letter-spacing:-0.045px">Wildpeace (feat. Adeola And Jacknife Lee)</div><div class="c" style="left:372.5px;letter-spacing:0.1px">U2</div><div class="c" style="left:722.5px;letter-spacing:-0.13px">Days of ash</div><div class="c" style="left:972.6px;letter-spacing:-0.4px">Rock</div><div class="sc"><svg class="stars" width="100" height="18" viewBox="0 0 100 18"><path transform="translate(0,0)" d="M10.7 0.7 L13.1 5.9 L18.4 6.1 L14.5 10.9 L15.8 16.8 L10.7 13.9 L5.6 16.8 L6.9 10.9 L3.0 6.1 L8.3 5.9 Z" fill="none" stroke="#6b6c67" stroke-width="1" stroke-linejoin="round"/><path transform="translate(20,0)" d="M10.7 0.7 L13.1 5.9 L18.4 6.1 L14.5 10.9 L15.8 16.8 L10.7 13.9 L5.6 16.8 L6.9 10.9 L3.0 6.1 L8.3 5.9 Z" fill="none" stroke="#6b6c67" stroke-width="1" stroke-linejoin="round"/><path transform="translate(40,0)" d="M10.7 0.7 L13.1 5.9 L18.4 6.1 L14.5 10.9 L15.8 16.8 L10.7 13.9 L5.6 16.8 L6.9 10.9 L3.0 6.1 L8.3 5.9 Z" fill="none" stroke="#6b6c67" stroke-width="1" stroke-linejoin="round"/><path transform="translate(60,0)" d="M10.7 0.7 L13.1 5.9 L18.4 6.1 L14.5 10.9 L15.8 16.8 L10.7 13.9 L5.6 16.8 L6.9 10.9 L3.0 6.1 L8.3 5.9 Z" fill="none" stroke="#6b6c67" stroke-width="1" stroke-linejoin="round"/><path transform="translate(80,0)" d="M10.7 0.7 L13.1 5.9 L18.4 6.1 L14.5 10.9 L15.8 16.8 L10.7 13.9 L5.6 16.8 L6.9 10.9 L3.0 6.1 L8.3 5.9 Z" fill="none" stroke="#6b6c67" stroke-width="1" stroke-linejoin="round"/></svg></div></div>
<div class="row" style="top:552px"><div class="c" style="left:22.1px;letter-spacing:0.073px">Breaking Out</div><div class="c" style="left:373.5px;letter-spacing:0.047px">American adrenalin</div><div class="c" style="left:722.5px">Burn the ships</div><div class="c" style="left:973.1px;letter-spacing:0.169px">Alternative metal</div><div class="sc"><svg class="stars" width="100" height="18" viewBox="0 0 100 18"><path transform="translate(0,0)" d="M10.7 0.7 L13.1 5.9 L18.4 6.1 L14.5 10.9 L15.8 16.8 L10.7 13.9 L5.6 16.8 L6.9 10.9 L3.0 6.1 L8.3 5.9 Z" fill="none" stroke="#6b6c67" stroke-width="1" stroke-linejoin="round"/><path transform="translate(20,0)" d="M10.7 0.7 L13.1 5.9 L18.4 6.1 L14.5 10.9 L15.8 16.8 L10.7 13.9 L5.6 16.8 L6.9 10.9 L3.0 6.1 L8.3 5.9 Z" fill="none" stroke="#6b6c67" stroke-width="1" stroke-linejoin="round"/><path transform="translate(40,0)" d="M10.7 0.7 L13.1 5.9 L18.4 6.1 L14.5 10.9 L15.8 16.8 L10.7 13.9 L5.6 16.8 L6.9 10.9 L3.0 6.1 L8.3 5.9 Z" fill="none" stroke="#6b6c67" stroke-width="1" stroke-linejoin="round"/><path transform="translate(60,0)" d="M10.7 0.7 L13.1 5.9 L18.4 6.1 L14.5 10.9 L15.8 16.8 L10.7 13.9 L5.6 16.8 L6.9 10.9 L3.0 6.1 L8.3 5.9 Z" fill="none" stroke="#6b6c67" stroke-width="1" stroke-linejoin="round"/><path transform="translate(80,0)" d="M10.7 0.7 L13.1 5.9 L18.4 6.1 L14.5 10.9 L15.8 16.8 L10.7 13.9 L5.6 16.8 L6.9 10.9 L3.0 6.1 L8.3 5.9 Z" fill="none" stroke="#6b6c67" stroke-width="1" stroke-linejoin="round"/></svg></div></div>
<div class="row" style="top:592px"><div class="c" style="left:23.1px;letter-spacing:0.106px">American Adrenalin</div><div class="c" style="left:373.5px;letter-spacing:0.047px">American adrenalin</div><div class="c" style="left:722.5px">Burn the ships</div><div class="c" style="left:973.1px;letter-spacing:0.169px">Alternative metal</div><div class="sc"><svg class="stars" width="100" height="18" viewBox="0 0 100 18"><path transform="translate(0,0)" d="M10.7 0.7 L13.1 5.9 L18.4 6.1 L14.5 10.9 L15.8 16.8 L10.7 13.9 L5.6 16.8 L6.9 10.9 L3.0 6.1 L8.3 5.9 Z" fill="none" stroke="#6b6c67" stroke-width="1" stroke-linejoin="round"/><path transform="translate(20,0)" d="M10.7 0.7 L13.1 5.9 L18.4 6.1 L14.5 10.9 L15.8 16.8 L10.7 13.9 L5.6 16.8 L6.9 10.9 L3.0 6.1 L8.3 5.9 Z" fill="none" stroke="#6b6c67" stroke-width="1" stroke-linejoin="round"/><path transform="translate(40,0)" d="M10.7 0.7 L13.1 5.9 L18.4 6.1 L14.5 10.9 L15.8 16.8 L10.7 13.9 L5.6 16.8 L6.9 10.9 L3.0 6.1 L8.3 5.9 Z" fill="none" stroke="#6b6c67" stroke-width="1" stroke-linejoin="round"/><path transform="translate(60,0)" d="M10.7 0.7 L13.1 5.9 L18.4 6.1 L14.5 10.9 L15.8 16.8 L10.7 13.9 L5.6 16.8 L6.9 10.9 L3.0 6.1 L8.3 5.9 Z" fill="none" stroke="#6b6c67" stroke-width="1" stroke-linejoin="round"/><path transform="translate(80,0)" d="M10.7 0.7 L13.1 5.9 L18.4 6.1 L14.5 10.9 L15.8 16.8 L10.7 13.9 L5.6 16.8 L6.9 10.9 L3.0 6.1 L8.3 5.9 Z" fill="none" stroke="#6b6c67" stroke-width="1" stroke-linejoin="round"/></svg></div></div>
<div class="row" style="top:632px"><div class="c" style="left:22.1px;letter-spacing:0.208px">Mud in our Eye</div><div class="c" style="left:373.5px;letter-spacing:0.047px">American adrenalin</div><div class="c" style="left:722.5px">Burn the ships</div><div class="c" style="left:973.1px;letter-spacing:0.169px">Alternative metal</div><div class="sc"><svg class="stars" width="100" height="18" viewBox="0 0 100 18"><path transform="translate(0,0)" d="M10.7 0.7 L13.1 5.9 L18.4 6.1 L14.5 10.9 L15.8 16.8 L10.7 13.9 L5.6 16.8 L6.9 10.9 L3.0 6.1 L8.3 5.9 Z" fill="none" stroke="#6b6c67" stroke-width="1" stroke-linejoin="round"/><path transform="translate(20,0)" d="M10.7 0.7 L13.1 5.9 L18.4 6.1 L14.5 10.9 L15.8 16.8 L10.7 13.9 L5.6 16.8 L6.9 10.9 L3.0 6.1 L8.3 5.9 Z" fill="none" stroke="#6b6c67" stroke-width="1" stroke-linejoin="round"/><path transform="translate(40,0)" d="M10.7 0.7 L13.1 5.9 L18.4 6.1 L14.5 10.9 L15.8 16.8 L10.7 13.9 L5.6 16.8 L6.9 10.9 L3.0 6.1 L8.3 5.9 Z" fill="none" stroke="#6b6c67" stroke-width="1" stroke-linejoin="round"/><path transform="translate(60,0)" d="M10.7 0.7 L13.1 5.9 L18.4 6.1 L14.5 10.9 L15.8 16.8 L10.7 13.9 L5.6 16.8 L6.9 10.9 L3.0 6.1 L8.3 5.9 Z" fill="none" stroke="#6b6c67" stroke-width="1" stroke-linejoin="round"/><path transform="translate(80,0)" d="M10.7 0.7 L13.1 5.9 L18.4 6.1 L14.5 10.9 L15.8 16.8 L10.7 13.9 L5.6 16.8 L6.9 10.9 L3.0 6.1 L8.3 5.9 Z" fill="none" stroke="#6b6c67" stroke-width="1" stroke-linejoin="round"/></svg></div></div>
<div class="row" style="top:672px"><div class="c" style="left:23.1px;letter-spacing:0.08px">War Machine</div><div class="c" style="left:373.5px;letter-spacing:0.047px">American adrenalin</div><div class="c" style="left:722.5px">Burn the ships</div><div class="c" style="left:973.1px;letter-spacing:0.169px">Alternative metal</div><div class="sc"><svg class="stars" width="100" height="18" viewBox="0 0 100 18"><path transform="translate(0,0)" d="M10.7 0.7 L13.1 5.9 L18.4 6.1 L14.5 10.9 L15.8 16.8 L10.7 13.9 L5.6 16.8 L6.9 10.9 L3.0 6.1 L8.3 5.9 Z" fill="none" stroke="#6b6c67" stroke-width="1" stroke-linejoin="round"/><path transform="translate(20,0)" d="M10.7 0.7 L13.1 5.9 L18.4 6.1 L14.5 10.9 L15.8 16.8 L10.7 13.9 L5.6 16.8 L6.9 10.9 L3.0 6.1 L8.3 5.9 Z" fill="none" stroke="#6b6c67" stroke-width="1" stroke-linejoin="round"/><path transform="translate(40,0)" d="M10.7 0.7 L13.1 5.9 L18.4 6.1 L14.5 10.9 L15.8 16.8 L10.7 13.9 L5.6 16.8 L6.9 10.9 L3.0 6.1 L8.3 5.9 Z" fill="none" stroke="#6b6c67" stroke-width="1" stroke-linejoin="round"/><path transform="translate(60,0)" d="M10.7 0.7 L13.1 5.9 L18.4 6.1 L14.5 10.9 L15.8 16.8 L10.7 13.9 L5.6 16.8 L6.9 10.9 L3.0 6.1 L8.3 5.9 Z" fill="none" stroke="#6b6c67" stroke-width="1" stroke-linejoin="round"/><path transform="translate(80,0)" d="M10.7 0.7 L13.1 5.9 L18.4 6.1 L14.5 10.9 L15.8 16.8 L10.7 13.9 L5.6 16.8 L6.9 10.9 L3.0 6.1 L8.3 5.9 Z" fill="none" stroke="#6b6c67" stroke-width="1" stroke-linejoin="round"/></svg></div></div>
<div class="row" style="top:712px"><div class="c" style="left:23.1px;letter-spacing:-0.35px">Your Fear</div><div class="c" style="left:373.5px;letter-spacing:0.047px">American adrenalin</div><div class="c" style="left:722.5px">Burn the ships</div><div class="c" style="left:973.1px;letter-spacing:0.169px">Alternative metal</div><div class="sc"><svg class="stars" width="100" height="18" viewBox="0 0 100 18"><path transform="translate(0,0)" d="M10.7 0.7 L13.1 5.9 L18.4 6.1 L14.5 10.9 L15.8 16.8 L10.7 13.9 L5.6 16.8 L6.9 10.9 L3.0 6.1 L8.3 5.9 Z" fill="none" stroke="#6b6c67" stroke-width="1" stroke-linejoin="round"/><path transform="translate(20,0)" d="M10.7 0.7 L13.1 5.9 L18.4 6.1 L14.5 10.9 L15.8 16.8 L10.7 13.9 L5.6 16.8 L6.9 10.9 L3.0 6.1 L8.3 5.9 Z" fill="none" stroke="#6b6c67" stroke-width="1" stroke-linejoin="round"/><path transform="translate(40,0)" d="M10.7 0.7 L13.1 5.9 L18.4 6.1 L14.5 10.9 L15.8 16.8 L10.7 13.9 L5.6 16.8 L6.9 10.9 L3.0 6.1 L8.3 5.9 Z" fill="none" stroke="#6b6c67" stroke-width="1" stroke-linejoin="round"/><path transform="translate(60,0)" d="M10.7 0.7 L13.1 5.9 L18.4 6.1 L14.5 10.9 L15.8 16.8 L10.7 13.9 L5.6 16.8 L6.9 10.9 L3.0 6.1 L8.3 5.9 Z" fill="none" stroke="#6b6c67" stroke-width="1" stroke-linejoin="round"/><path transform="translate(80,0)" d="M10.7 0.7 L13.1 5.9 L18.4 6.1 L14.5 10.9 L15.8 16.8 L10.7 13.9 L5.6 16.8 L6.9 10.9 L3.0 6.1 L8.3 5.9 Z" fill="none" stroke="#6b6c67" stroke-width="1" stroke-linejoin="round"/></svg></div></div>
<div class="row" style="top:752px"><div class="c" style="left:22.1px;letter-spacing:0.048px">Boys (summertime love)</div><span class="ly" style="left:178.6px">lyrics</span><div class="c" style="left:372.2px;letter-spacing:0.125px">Ludwig von 88</div><div class="c" style="left:721.3px;letter-spacing:0.107px">17 plombs pour peter les tubes</div><div class="c" style="left:972.6px;letter-spacing:-0.08px">French punk</div><div class="sc"><svg class="stars" width="100" height="18" viewBox="0 0 100 18"><path transform="translate(0,0)" d="M10.7 0.7 L13.1 5.9 L18.4 6.1 L14.5 10.9 L15.8 16.8 L10.7 13.9 L5.6 16.8 L6.9 10.9 L3.0 6.1 L8.3 5.9 Z" fill="#2783f5" stroke="#3a92fd" stroke-width="0.3" stroke-linejoin="round"/><path transform="translate(20,0)" d="M10.7 0.7 L13.1 5.9 L18.4 6.1 L14.5 10.9 L15.8 16.8 L10.7 13.9 L5.6 16.8 L6.9 10.9 L3.0 6.1 L8.3 5.9 Z" fill="#2783f5" stroke="#3a92fd" stroke-width="0.3" stroke-linejoin="round"/><path transform="translate(40,0)" d="M10.7 0.7 L13.1 5.9 L18.4 6.1 L14.5 10.9 L15.8 16.8 L10.7 13.9 L5.6 16.8 L6.9 10.9 L3.0 6.1 L8.3 5.9 Z" fill="#2783f5" stroke="#3a92fd" stroke-width="0.3" stroke-linejoin="round"/><path transform="translate(60,0)" d="M10.7 0.7 L13.1 5.9 L18.4 6.1 L14.5 10.9 L15.8 16.8 L10.7 13.9 L5.6 16.8 L6.9 10.9 L3.0 6.1 L8.3 5.9 Z" fill="#2783f5" stroke="#3a92fd" stroke-width="0.3" stroke-linejoin="round"/><path transform="translate(80,0)" d="M10.7 0.7 L13.1 5.9 L18.4 6.1 L14.5 10.9 L15.8 16.8 L10.7 13.9 L5.6 16.8 L6.9 10.9 L3.0 6.1 L8.3 5.9 Z" fill="#2783f5" stroke="#3a92fd" stroke-width="0.3" stroke-linejoin="round"/></svg></div></div>
<div class="row" style="top:792px"><div class="c" style="left:22.1px;letter-spacing:-0.036px">Idées noires</div><span class="ly" style="left:104.7px">lyrics</span><div class="c" style="left:372.2px;letter-spacing:0.05px">Bernard lavillier</div><div class="c" style="left:722.0px;letter-spacing:0.1px">Best of</div><div class="c" style="left:972.6px;letter-spacing:-0.13px">French rock</div><div class="sc"><svg class="stars" width="100" height="18" viewBox="0 0 100 18"><path transform="translate(0,0)" d="M10.7 0.7 L13.1 5.9 L18.4 6.1 L14.5 10.9 L15.8 16.8 L10.7 13.9 L5.6 16.8 L6.9 10.9 L3.0 6.1 L8.3 5.9 Z" fill="#2783f5" stroke="#3a92fd" stroke-width="0.3" stroke-linejoin="round"/><path transform="translate(20,0)" d="M10.7 0.7 L13.1 5.9 L18.4 6.1 L14.5 10.9 L15.8 16.8 L10.7 13.9 L5.6 16.8 L6.9 10.9 L3.0 6.1 L8.3 5.9 Z" fill="#2783f5" stroke="#3a92fd" stroke-width="0.3" stroke-linejoin="round"/><path transform="translate(40,0)" d="M10.7 0.7 L13.1 5.9 L18.4 6.1 L14.5 10.9 L15.8 16.8 L10.7 13.9 L5.6 16.8 L6.9 10.9 L3.0 6.1 L8.3 5.9 Z" fill="#2783f5" stroke="#3a92fd" stroke-width="0.3" stroke-linejoin="round"/><path transform="translate(60,0)" d="M10.7 0.7 L13.1 5.9 L18.4 6.1 L14.5 10.9 L15.8 16.8 L10.7 13.9 L5.6 16.8 L6.9 10.9 L3.0 6.1 L8.3 5.9 Z" fill="#2783f5" stroke="#3a92fd" stroke-width="0.3" stroke-linejoin="round"/><path transform="translate(80,0)" d="M10.7 0.7 L13.1 5.9 L18.4 6.1 L14.5 10.9 L15.8 16.8 L10.7 13.9 L5.6 16.8 L6.9 10.9 L3.0 6.1 L8.3 5.9 Z" fill="#2783f5" stroke="#3a92fd" stroke-width="0.3" stroke-linejoin="round"/></svg></div></div>
<div class="row" style="top:832px"><div class="c" style="left:23.1px;letter-spacing:-0.22px">J&#x27;suis punk</div><div class="c" style="left:372.2px;letter-spacing:0.062px">Bulldozer</div><div class="c" style="left:722.3px;letter-spacing:-0.191px">Je suis punk</div><div class="c" style="left:972.6px;letter-spacing:-0.08px">French punk</div><div class="sc"><svg class="stars" width="100" height="18" viewBox="0 0 100 18"><path transform="translate(0,0)" d="M10.7 0.7 L13.1 5.9 L18.4 6.1 L14.5 10.9 L15.8 16.8 L10.7 13.9 L5.6 16.8 L6.9 10.9 L3.0 6.1 L8.3 5.9 Z" fill="none" stroke="#6b6c67" stroke-width="1" stroke-linejoin="round"/><path transform="translate(20,0)" d="M10.7 0.7 L13.1 5.9 L18.4 6.1 L14.5 10.9 L15.8 16.8 L10.7 13.9 L5.6 16.8 L6.9 10.9 L3.0 6.1 L8.3 5.9 Z" fill="none" stroke="#6b6c67" stroke-width="1" stroke-linejoin="round"/><path transform="translate(40,0)" d="M10.7 0.7 L13.1 5.9 L18.4 6.1 L14.5 10.9 L15.8 16.8 L10.7 13.9 L5.6 16.8 L6.9 10.9 L3.0 6.1 L8.3 5.9 Z" fill="none" stroke="#6b6c67" stroke-width="1" stroke-linejoin="round"/><path transform="translate(60,0)" d="M10.7 0.7 L13.1 5.9 L18.4 6.1 L14.5 10.9 L15.8 16.8 L10.7 13.9 L5.6 16.8 L6.9 10.9 L3.0 6.1 L8.3 5.9 Z" fill="none" stroke="#6b6c67" stroke-width="1" stroke-linejoin="round"/><path transform="translate(80,0)" d="M10.7 0.7 L13.1 5.9 L18.4 6.1 L14.5 10.9 L15.8 16.8 L10.7 13.9 L5.6 16.8 L6.9 10.9 L3.0 6.1 L8.3 5.9 Z" fill="none" stroke="#6b6c67" stroke-width="1" stroke-linejoin="round"/></svg></div></div>
<div class="row" style="top:872px"><div class="c" style="left:22.1px;letter-spacing:0.145px">Nuit sauvage</div><span class="ly" style="left:110.8px">lyrics</span><div class="c" style="left:372.2px;letter-spacing:-0.289px">Les avions</div><div class="c" style="left:721.3px;letter-spacing:0.105px">Culture dance vol. 9</div><div class="c" style="left:972.6px;letter-spacing:0.078px">French pop</div><div class="sc"><svg class="stars" width="100" height="18" viewBox="0 0 100 18"><path transform="translate(0,0)" d="M10.7 0.7 L13.1 5.9 L18.4 6.1 L14.5 10.9 L15.8 16.8 L10.7 13.9 L5.6 16.8 L6.9 10.9 L3.0 6.1 L8.3 5.9 Z" fill="none" stroke="#6b6c67" stroke-width="1" stroke-linejoin="round"/><path transform="translate(20,0)" d="M10.7 0.7 L13.1 5.9 L18.4 6.1 L14.5 10.9 L15.8 16.8 L10.7 13.9 L5.6 16.8 L6.9 10.9 L3.0 6.1 L8.3 5.9 Z" fill="none" stroke="#6b6c67" stroke-width="1" stroke-linejoin="round"/><path transform="translate(40,0)" d="M10.7 0.7 L13.1 5.9 L18.4 6.1 L14.5 10.9 L15.8 16.8 L10.7 13.9 L5.6 16.8 L6.9 10.9 L3.0 6.1 L8.3 5.9 Z" fill="none" stroke="#6b6c67" stroke-width="1" stroke-linejoin="round"/><path transform="translate(60,0)" d="M10.7 0.7 L13.1 5.9 L18.4 6.1 L14.5 10.9 L15.8 16.8 L10.7 13.9 L5.6 16.8 L6.9 10.9 L3.0 6.1 L8.3 5.9 Z" fill="none" stroke="#6b6c67" stroke-width="1" stroke-linejoin="round"/><path transform="translate(80,0)" d="M10.7 0.7 L13.1 5.9 L18.4 6.1 L14.5 10.9 L15.8 16.8 L10.7 13.9 L5.6 16.8 L6.9 10.9 L3.0 6.1 L8.3 5.9 Z" fill="none" stroke="#6b6c67" stroke-width="1" stroke-linejoin="round"/></svg></div></div>
<div class="row" style="top:912px"><div class="c" style="left:22.1px;letter-spacing:0.021px">Bulls on parade</div><span class="ly" style="left:125.8px">lyrics</span><div class="c" style="left:372.2px">Rage against the machine</div><div class="c" style="left:722.0px;letter-spacing:0.04px">Evil empire</div><div class="c" style="left:972.6px;letter-spacing:0.011px">Funk metal</div><div class="sc"><svg class="stars" width="100" height="18" viewBox="0 0 100 18"><path transform="translate(0,0)" d="M10.7 0.7 L13.1 5.9 L18.4 6.1 L14.5 10.9 L15.8 16.8 L10.7 13.9 L5.6 16.8 L6.9 10.9 L3.0 6.1 L8.3 5.9 Z" fill="#2783f5" stroke="#3a92fd" stroke-width="0.3" stroke-linejoin="round"/><path transform="translate(20,0)" d="M10.7 0.7 L13.1 5.9 L18.4 6.1 L14.5 10.9 L15.8 16.8 L10.7 13.9 L5.6 16.8 L6.9 10.9 L3.0 6.1 L8.3 5.9 Z" fill="#2783f5" stroke="#3a92fd" stroke-width="0.3" stroke-linejoin="round"/><path transform="translate(40,0)" d="M10.7 0.7 L13.1 5.9 L18.4 6.1 L14.5 10.9 L15.8 16.8 L10.7 13.9 L5.6 16.8 L6.9 10.9 L3.0 6.1 L8.3 5.9 Z" fill="#2783f5" stroke="#3a92fd" stroke-width="0.3" stroke-linejoin="round"/><path transform="translate(60,0)" d="M10.7 0.7 L13.1 5.9 L18.4 6.1 L14.5 10.9 L15.8 16.8 L10.7 13.9 L5.6 16.8 L6.9 10.9 L3.0 6.1 L8.3 5.9 Z" fill="#2783f5" stroke="#3a92fd" stroke-width="0.3" stroke-linejoin="round"/><path transform="translate(80,0)" d="M10.7 0.7 L13.1 5.9 L18.4 6.1 L14.5 10.9 L15.8 16.8 L10.7 13.9 L5.6 16.8 L6.9 10.9 L3.0 6.1 L8.3 5.9 Z" fill="none" stroke="#6b6c67" stroke-width="1" stroke-linejoin="round"/></svg></div></div>
<div class="row" style="top:952px"><div class="c" style="left:22.1px;letter-spacing:0.22px">Hélène</div><span class="ly" style="left:73.8px">lyrics</span><div class="c" style="left:372.2px;letter-spacing:-0.082px">Roch voisine</div><div class="c" style="left:722.0px;letter-spacing:-0.15px">Forever slows</div><div class="c" style="left:972.6px;letter-spacing:-0.133px">Slow francais</div><div class="sc"><svg class="stars" width="100" height="18" viewBox="0 0 100 18"><path transform="translate(0,0)" d="M10.7 0.7 L13.1 5.9 L18.4 6.1 L14.5 10.9 L15.8 16.8 L10.7 13.9 L5.6 16.8 L6.9 10.9 L3.0 6.1 L8.3 5.9 Z" fill="none" stroke="#6b6c67" stroke-width="1" stroke-linejoin="round"/><path transform="translate(20,0)" d="M10.7 0.7 L13.1 5.9 L18.4 6.1 L14.5 10.9 L15.8 16.8 L10.7 13.9 L5.6 16.8 L6.9 10.9 L3.0 6.1 L8.3 5.9 Z" fill="none" stroke="#6b6c67" stroke-width="1" stroke-linejoin="round"/><path transform="translate(40,0)" d="M10.7 0.7 L13.1 5.9 L18.4 6.1 L14.5 10.9 L15.8 16.8 L10.7 13.9 L5.6 16.8 L6.9 10.9 L3.0 6.1 L8.3 5.9 Z" fill="none" stroke="#6b6c67" stroke-width="1" stroke-linejoin="round"/><path transform="translate(60,0)" d="M10.7 0.7 L13.1 5.9 L18.4 6.1 L14.5 10.9 L15.8 16.8 L10.7 13.9 L5.6 16.8 L6.9 10.9 L3.0 6.1 L8.3 5.9 Z" fill="none" stroke="#6b6c67" stroke-width="1" stroke-linejoin="round"/><path transform="translate(80,0)" d="M10.7 0.7 L13.1 5.9 L18.4 6.1 L14.5 10.9 L15.8 16.8 L10.7 13.9 L5.6 16.8 L6.9 10.9 L3.0 6.1 L8.3 5.9 Z" fill="none" stroke="#6b6c67" stroke-width="1" stroke-linejoin="round"/></svg></div></div>
<div class="row" style="top:992px"><div class="c" style="left:22.1px;letter-spacing:-0.1px">Désenchantée</div><span class="ly" style="left:118.0px">lyrics</span><div class="c" style="left:372.2px;letter-spacing:0.208px">Mylene farmer</div><div class="c" style="left:722.0px;letter-spacing:0.3px">L&#x27;autre</div><div class="c" style="left:972.6px;letter-spacing:0.078px">French pop</div><div class="sc"><svg class="stars" width="100" height="18" viewBox="0 0 100 18"><path transform="translate(0,0)" d="M10.7 0.7 L13.1 5.9 L18.4 6.1 L14.5 10.9 L15.8 16.8 L10.7 13.9 L5.6 16.8 L6.9 10.9 L3.0 6.1 L8.3 5.9 Z" fill="#2783f5" stroke="#3a92fd" stroke-width="0.3" stroke-linejoin="round"/><path transform="translate(20,0)" d="M10.7 0.7 L13.1 5.9 L18.4 6.1 L14.5 10.9 L15.8 16.8 L10.7 13.9 L5.6 16.8 L6.9 10.9 L3.0 6.1 L8.3 5.9 Z" fill="#2783f5" stroke="#3a92fd" stroke-width="0.3" stroke-linejoin="round"/><path transform="translate(40,0)" d="M10.7 0.7 L13.1 5.9 L18.4 6.1 L14.5 10.9 L15.8 16.8 L10.7 13.9 L5.6 16.8 L6.9 10.9 L3.0 6.1 L8.3 5.9 Z" fill="none" stroke="#6b6c67" stroke-width="1" stroke-linejoin="round"/><path transform="translate(60,0)" d="M10.7 0.7 L13.1 5.9 L18.4 6.1 L14.5 10.9 L15.8 16.8 L10.7 13.9 L5.6 16.8 L6.9 10.9 L3.0 6.1 L8.3 5.9 Z" fill="none" stroke="#6b6c67" stroke-width="1" stroke-linejoin="round"/><path transform="translate(80,0)" d="M10.7 0.7 L13.1 5.9 L18.4 6.1 L14.5 10.9 L15.8 16.8 L10.7 13.9 L5.6 16.8 L6.9 10.9 L3.0 6.1 L8.3 5.9 Z" fill="none" stroke="#6b6c67" stroke-width="1" stroke-linejoin="round"/></svg></div></div>
<div class="row" style="top:1032px"><div class="c" style="left:22.1px;letter-spacing:0.091px">C&#x27;est une belle journée</div><span class="ly" style="left:171.6px">lyrics</span><div class="c" style="left:372.2px;letter-spacing:0.208px">Mylene farmer</div><div class="c" style="left:722.0px;letter-spacing:-0.114px">Les mots</div><div class="c" style="left:972.6px;letter-spacing:0.078px">French pop</div><div class="sc"><svg class="stars" width="100" height="18" viewBox="0 0 100 18"><path transform="translate(0,0)" d="M10.7 0.7 L13.1 5.9 L18.4 6.1 L14.5 10.9 L15.8 16.8 L10.7 13.9 L5.6 16.8 L6.9 10.9 L3.0 6.1 L8.3 5.9 Z" fill="#2783f5" stroke="#3a92fd" stroke-width="0.3" stroke-linejoin="round"/><path transform="translate(20,0)" d="M10.7 0.7 L13.1 5.9 L18.4 6.1 L14.5 10.9 L15.8 16.8 L10.7 13.9 L5.6 16.8 L6.9 10.9 L3.0 6.1 L8.3 5.9 Z" fill="#2783f5" stroke="#3a92fd" stroke-width="0.3" stroke-linejoin="round"/><path transform="translate(40,0)" d="M10.7 0.7 L13.1 5.9 L18.4 6.1 L14.5 10.9 L15.8 16.8 L10.7 13.9 L5.6 16.8 L6.9 10.9 L3.0 6.1 L8.3 5.9 Z" fill="none" stroke="#6b6c67" stroke-width="1" stroke-linejoin="round"/><path transform="translate(60,0)" d="M10.7 0.7 L13.1 5.9 L18.4 6.1 L14.5 10.9 L15.8 16.8 L10.7 13.9 L5.6 16.8 L6.9 10.9 L3.0 6.1 L8.3 5.9 Z" fill="none" stroke="#6b6c67" stroke-width="1" stroke-linejoin="round"/><path transform="translate(80,0)" d="M10.7 0.7 L13.1 5.9 L18.4 6.1 L14.5 10.9 L15.8 16.8 L10.7 13.9 L5.6 16.8 L6.9 10.9 L3.0 6.1 L8.3 5.9 Z" fill="none" stroke="#6b6c67" stroke-width="1" stroke-linejoin="round"/></svg></div></div>

  <!-- scroll indicator -->
  <div class="abs" style="left:1563px;top:1024px;width:12px;height:12px;border-radius:6px;background:#383935;"></div>
  <div class="abs" style="left:1567px;top:1029px;width:4px;height:2px;background:#fff;"></div>
</div>
<div id="bord"></div>
</body>
</html>
